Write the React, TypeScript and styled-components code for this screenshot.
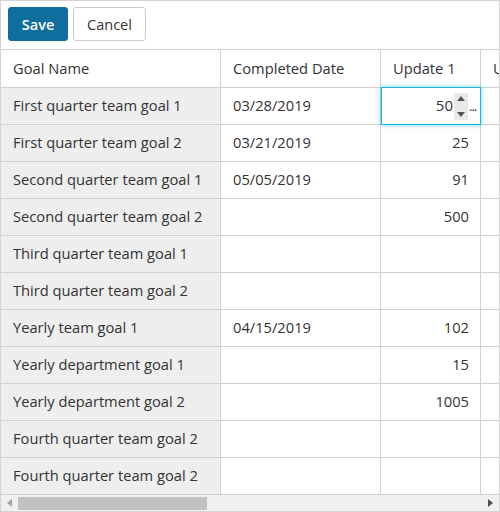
import styled, { createGlobalStyle } from "styled-components";

const GlobalStyle = createGlobalStyle`
  html, body {
    margin: 0;
    padding: 0;
    background: #ffffff;
  }
  body {
    font-family: "Open Sans", "Noto Sans", Arial, sans-serif;
    color: #333333;
  }
`;

const Frame = styled.div`
  width: 500px;
  height: 512px;
  box-sizing: border-box;
  border: 1px solid #d3d3d3;
  display: flex;
  flex-direction: column;
  overflow: hidden;
`;

const Toolbar = styled.div`
  display: flex;
  gap: 5px;
  padding: 6px 7px 8px;
  height: 48px;
  box-sizing: border-box;
`;

const Button = styled.button<{ $primary?: boolean }>`
  height: 34px;
  box-sizing: border-box;
  padding: 0;
  border-radius: 3px;
  font-family: inherit;
  font-size: 14.5px;
  font-weight: ${({ $primary }) => ($primary ? 600 : 400)};
  color: ${({ $primary }) => ($primary ? "#ffffff" : "#333333")};
  background: ${({ $primary }) => ($primary ? "#0f6f9c" : "#ffffff")};
  border: 1px solid ${({ $primary }) => ($primary ? "#0f6f9c" : "#cccccc")};
  width: ${({ $primary }) => ($primary ? "60px" : "73px")};
`;

const Grid = styled.div`
  display: grid;
  grid-template-columns: 220px 160px 100px 100px;
  grid-template-rows: 38px;
  grid-auto-rows: 37px;
  border-top: 1px solid #d0d0d0;
  flex: 1;
  overflow: hidden;
`;

const Cell = styled.div<{ $shade?: boolean; $num?: boolean }>`
  position: relative;
  box-sizing: border-box;
  border-right: 1px solid #d0d0d0;
  border-bottom: 1px solid #d0d0d0;
  background: ${({ $shade }) => ($shade ? "#eeeeee" : "#ffffff")};
  display: flex;
  align-items: center;
  justify-content: ${({ $num }) => ($num ? "flex-end" : "flex-start")};
  padding: 0 11px 2px 12px;
  font-size: 14.7px;
  white-space: nowrap;
  overflow: hidden;
`;

const EditCell = styled.div`
  position: relative;
  box-sizing: border-box;
  border-right: 1px solid #d0d0d0;
  border-bottom: 1px solid #d0d0d0;
`;

const Editor = styled.div`
  position: absolute;
  top: -1px;
  left: 0;
  right: -1px;
  bottom: -1px;
  border: 1px solid #1ab3e6;
  box-shadow: 0 0 5px rgba(26, 179, 230, 0.6);
  background: #ffffff;
  display: flex;
  align-items: center;
  justify-content: flex-end;
  font-size: 15px;
  z-index: 2;
`;

const EditValue = styled.span`
  margin-right: 1px;
  padding-bottom: 2px;
`;

const Spinner = styled.div`
  width: 14px;
  height: 27px;
  background: #e9e9e9;
  display: flex;
  flex-direction: column;
  justify-content: space-between;
  align-items: center;
  padding: 3px 0;
  box-sizing: border-box;
`;

const Dots = styled.span`
  width: 11px;
  font-size: 13px;
  color: #333;
  letter-spacing: -1px;
  padding-left: 1px;
`;

const ScrollBar = styled.div`
  height: 16px;
  background: #f0f0f0;
  display: flex;
  align-items: center;
  flex-shrink: 0;
`;

const Arrow = styled.div`
  width: 17px;
  display: flex;
  justify-content: center;
`;

const Track = styled.div`
  flex: 1;
  height: 13px;
  display: flex;
`;

const Thumb = styled.div`
  width: 189px;
  height: 13px;
  background: #c1c1c1;
`;

const rows: [string, string, string][] = [
  ["First quarter team goal 1", "03/28/2019", "50"],
  ["First quarter team goal 2", "03/21/2019", "25"],
  ["Second quarter team goal 1", "05/05/2019", "91"],
  ["Second quarter team goal 2", "", "500"],
  ["Third quarter team goal 1", "", ""],
  ["Third quarter team goal 2", "", ""],
  ["Yearly team goal 1", "04/15/2019", "102"],
  ["Yearly department goal 1", "", "15"],
  ["Yearly department goal 2", "", "1005"],
  ["Fourth quarter team goal 2", "", ""],
  ["Fourth quarter team goal 2", "", ""],
];

export default function App() {
  return (
    <>
      <GlobalStyle />
      <Frame>
        <Toolbar>
          <Button $primary>Save</Button>
          <Button>Cancel</Button>
        </Toolbar>
        <Grid>
          <Cell>Goal Name</Cell>
          <Cell>Completed Date</Cell>
          <Cell>Update 1</Cell>
          <Cell>Update 2</Cell>
          {rows.map(([name, date, val], i) => [
            <Cell key={`n${i}`} $shade>
              {name}
            </Cell>,
            <Cell key={`d${i}`}>{date}</Cell>,
            i === 0 ? (
              <EditCell key={`e${i}`}>
                <Editor>
                  <EditValue>{val}</EditValue>
                  <Spinner>
                    <svg width="8" height="5" viewBox="0 0 8 5">
                      <path d="M0 5 L4 0 L8 5 Z" fill="#555" />
                    </svg>
                    <svg width="8" height="5" viewBox="0 0 8 5">
                      <path d="M0 0 L4 5 L8 0 Z" fill="#555" />
                    </svg>
                  </Spinner>
                  <Dots>...</Dots>
                </Editor>
              </EditCell>
            ) : (
              <Cell key={`v${i}`} $num>
                {val}
              </Cell>
            ),
            <Cell key={`x${i}`} />,
          ])}
        </Grid>
        <ScrollBar>
          <Arrow>
            <svg width="5" height="8" viewBox="0 0 5 8">
              <path d="M5 0 L0 4 L5 8 Z" fill="#a3a3a3" />
            </svg>
          </Arrow>
          <Track>
            <Thumb />
          </Track>
          <Arrow>
            <svg width="5" height="8" viewBox="0 0 5 8">
              <path d="M0 0 L5 4 L0 8 Z" fill="#505050" />
            </svg>
          </Arrow>
        </ScrollBar>
      </Frame>
    </>
  );
}
